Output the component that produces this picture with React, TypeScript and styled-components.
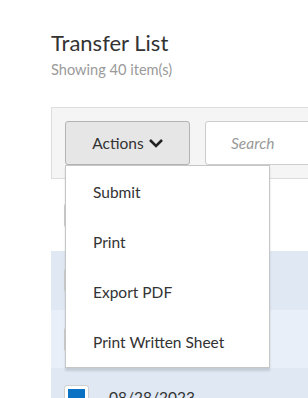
import React from "react";
import styled, { createGlobalStyle } from "styled-components";

const Global = createGlobalStyle`
  html, body { margin: 0; padding: 0; background: #fff; }
  body { font-family: Lato, "Open Sans", sans-serif; color: #333; overflow: hidden; }
`;

const Page = styled.div`
  width: 308px;
  height: 398px;
  overflow: hidden;
  padding: 30px 0 0 51px;
  box-sizing: border-box;
`;

const Title = styled.h1`
  margin: 0;
  font-size: 22px;
  line-height: 26px;
  font-weight: 400;
  color: #333;
`;

const Subtitle = styled.div`
  margin-top: 6px;
  font-size: 14.6px;
  line-height: 16px;
  color: #9a9a9a;
`;

const Panel = styled.div`
  margin-top: 29px;
  width: 420px;
`;

const Toolbar = styled.div`
  height: 72px;
  box-sizing: border-box;
  background: #f5f5f5;
  border: 1px solid #ddd;
  padding: 13px 13px;
  display: flex;
  align-items: flex-start;
  gap: 15px;
`;

const ActionsWrap = styled.div`
  position: relative;
`;

const ActionsButton = styled.button`
  width: 125px;
  height: 44px;
  box-sizing: border-box;
  background: #e6e6e6;
  border: 1px solid #b3b3b3;
  border-radius: 3px;
  font-family: inherit;
  font-size: 15.5px;
  color: #333;
  display: flex;
  align-items: center;
  justify-content: center;
  gap: 4px;
  padding: 0 0 0 1px;
`;

const Search = styled.div`
  width: 220px;
  height: 44px;
  box-sizing: border-box;
  background: #fff;
  border: 1px solid #ccc;
  border-radius: 3px;
  display: flex;
  align-items: center;
  padding-left: 25px;
  font-size: 15.5px;
  font-style: italic;
  color: #999;
`;

const Menu = styled.ul`
  position: absolute;
  top: 44px;
  left: 0;
  width: 205px;
  margin: 0;
  padding: 1px 0 0;
  list-style: none;
  box-sizing: border-box;
  background: #fff;
  border: 1px solid #c6c6c6;
  box-shadow: 0 3px 2px rgba(0, 0, 0, 0.12);
  z-index: 5;
`;

const MenuItem = styled.li`
  height: 50px;
  display: flex;
  align-items: center;
  padding-left: 27px;
  font-size: 15.5px;
  color: #333;
`;

const Row = styled.div<{ $h: number; $bg: string }>`
  height: ${(p) => p.$h}px;
  background: ${(p) => p.$bg};
  display: flex;
  align-items: center;
  padding-left: 13px;
  gap: 20px;
`;

const Check = styled.div<{ $checked?: boolean }>`
  width: 25px;
  height: 25px;
  box-sizing: border-box;
  background: #fff;
  border: 1px solid #cfcfcf;
  border-radius: 3px;
  padding: 3px;
  &::after {
    content: "";
    display: ${(p) => (p.$checked ? "block" : "none")};
    width: 100%;
    height: 100%;
    background: #0b72c4;
  }
`;

const Cell = styled.span`
  font-size: 15.5px;
  color: #333;
`;

export default function App() {
  return (
    <>
      <Global />
      <Page>
        <Title>Transfer List</Title>
        <Subtitle>Showing 40 item(s)</Subtitle>
        <Panel>
          <Toolbar>
            <ActionsWrap>
              <ActionsButton>
                Actions
                <svg width="16" height="12" viewBox="0 0 16 12">
                  <polyline points="2,3 8,9 14,3" fill="none" stroke="#222" strokeWidth="2.6" />
                </svg>
              </ActionsButton>
              <Menu>
                <MenuItem>Submit</MenuItem>
                <MenuItem>Print</MenuItem>
                <MenuItem>Export PDF</MenuItem>
                <MenuItem>Print Written Sheet</MenuItem>
              </Menu>
            </ActionsWrap>
            <Search>Search</Search>
          </Toolbar>
          <Row $h={72} $bg="#fff">
            <Check />
          </Row>
          <Row $h={59} $bg="#dfe8f3">
            <Check />
          </Row>
          <Row $h={58} $bg="#e8eff8">
            <Check />
          </Row>
          <Row $h={58} $bg="#dfe8f3">
            <Check $checked />
            <Cell>08/28/2023</Cell>
          </Row>
        </Panel>
      </Page>
    </>
  );
}
